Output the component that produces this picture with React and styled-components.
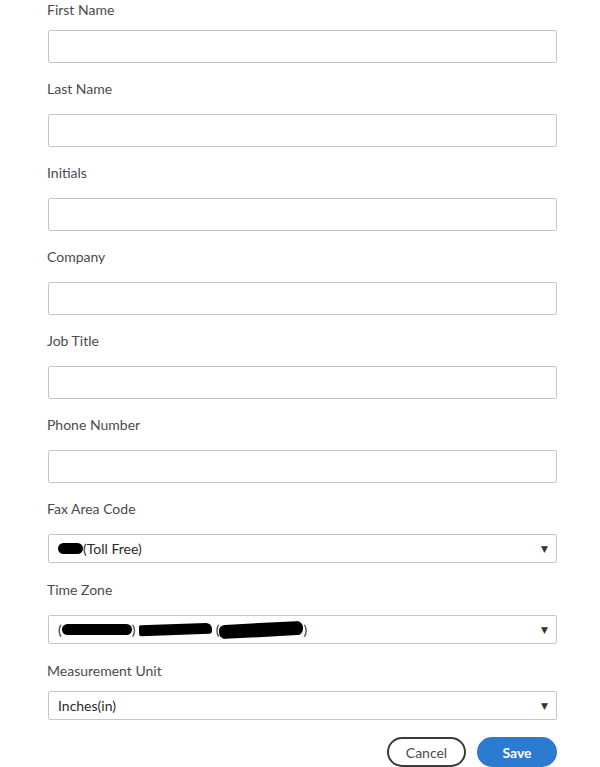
import React, { useState } from "react";
import styled, { createGlobalStyle } from "styled-components";

const GlobalStyle = createGlobalStyle`
    body {
        margin: 0;
        background: #fff;
        font-family: Lato, "Noto Sans", sans-serif;
    }
`;

const textFields = [
    { id: "firstName", label: "First Name" },
    { id: "lastName", label: "Last Name" },
    { id: "initials", label: "Initials" },
    { id: "company", label: "Company" },
    { id: "jobTitle", label: "Job Title" },
    { id: "phone", label: "Phone Number" },
];

const App = () => {
    const [values, setValues] = useState({});

    const handleChange = (id) => (e) => {
        setValues({ ...values, [id]: e.target.value });
    };

    return (
        <>
            <GlobalStyle />
            <Form onSubmit={(e) => e.preventDefault()}>
                {textFields.map((field, i) => (
                    <Field key={field.id} first={i === 0}>
                        <Label htmlFor={field.id}>{field.label}</Label>
                        <TextInput
                            id={field.id}
                            value={values[field.id] || ""}
                            onChange={handleChange(field.id)}
                        />
                    </Field>
                ))}

                <Field>
                    <Label>Fax Area Code</Label>
                    <SelectBox>
                        <SelectValue>
                            <Redact w={25} />(Toll Free)
                        </SelectValue>
                        <Caret>▼</Caret>
                    </SelectBox>
                </Field>

                <Field wide>
                    <Label>Time Zone</Label>
                    <SelectBox>
                        <SelectValue>
                            (<Redact w={70} />) <Redact w={73} skew /> (<Redact w={84} tall />)
                        </SelectValue>
                        <Caret>▼</Caret>
                    </SelectBox>
                </Field>

                <Field wide tight>
                    <Label>Measurement Unit</Label>
                    <SelectBox>
                        <SelectValue>Inches(in)</SelectValue>
                        <Caret>▼</Caret>
                    </SelectBox>
                </Field>

                <Actions>
                    <PillButton type="button">Cancel</PillButton>
                    <PillButton type="submit" primary>Save</PillButton>
                </Actions>
            </Form>
        </>
    );
};

// 스타일 컴포넌트들
const Form = styled.form`
    width: 509px;
    padding: 0 0 0 48px;
    margin: 0;
`;

const Field = styled.div`
    display: flex;
    flex-direction: column;
    margin-top: ${props => (props.first ? "0" : props.wide ? "18px" : "17px")};

    label {
        margin-left: -1px;
        margin-bottom: ${props => (props.first || props.tight ? "11px" : "16px")};
        margin-top: ${props => (props.first ? "1px" : "0")};
    }
`;

const Label = styled.label`
    font-size: 14px;
    line-height: 18px;
    color: #4b4b4b;
`;

const TextInput = styled.input`
    box-sizing: border-box;
    height: 33px;
    width: 100%;
    border: 1px solid #c6c6c6;
    border-radius: 2px;
    padding: 0 10px;
    font-family: inherit;
    font-size: 14px;
    outline: none;
`;

const SelectBox = styled.div`
    box-sizing: border-box;
    height: 29px;
    display: flex;
    align-items: center;
    justify-content: space-between;
    border: 1px solid #c6c6c6;
    border-radius: 2px;
    padding: 0 8px 0 9px;
`;

const SelectValue = styled.span`
    font-size: 14px;
    color: #2c2c2c;
    display: flex;
    align-items: center;
    white-space: pre;
`;

const Redact = styled.span`
    display: inline-block;
    width: ${props => props.w}px;
    height: ${props => (props.tall ? 14 : 11)}px;
    background: #000;
    border-radius: ${props => (props.skew ? "2px 6px 3px 2px" : "6px")};
    transform: ${props => (props.skew ? "rotate(-2deg)" : props.tall ? "rotate(-3deg)" : "none")};
`;

const Caret = styled.span`
    font-size: 9px;
    color: #333;
    font-family: "DejaVu Sans", sans-serif;
`;

const Actions = styled.div`
    display: flex;
    justify-content: flex-end;
    gap: 11px;
    margin-top: 17px;
`;

const PillButton = styled.button`
    box-sizing: border-box;
    width: ${props => (props.primary ? "80px" : "79px")};
    height: 30px;
    border-radius: 15px;
    font-family: inherit;
    font-size: 14px;
    font-weight: ${props => (props.primary ? 700 : 400)};
    color: ${props => (props.primary ? "#fff" : "#4b4b4b")};
    background: ${props => (props.primary ? "#2b7bd0" : "#fff")};
    border: ${props => (props.primary ? "none" : "2px solid #3a3a3a")};
    cursor: pointer;
`;

export default App;
